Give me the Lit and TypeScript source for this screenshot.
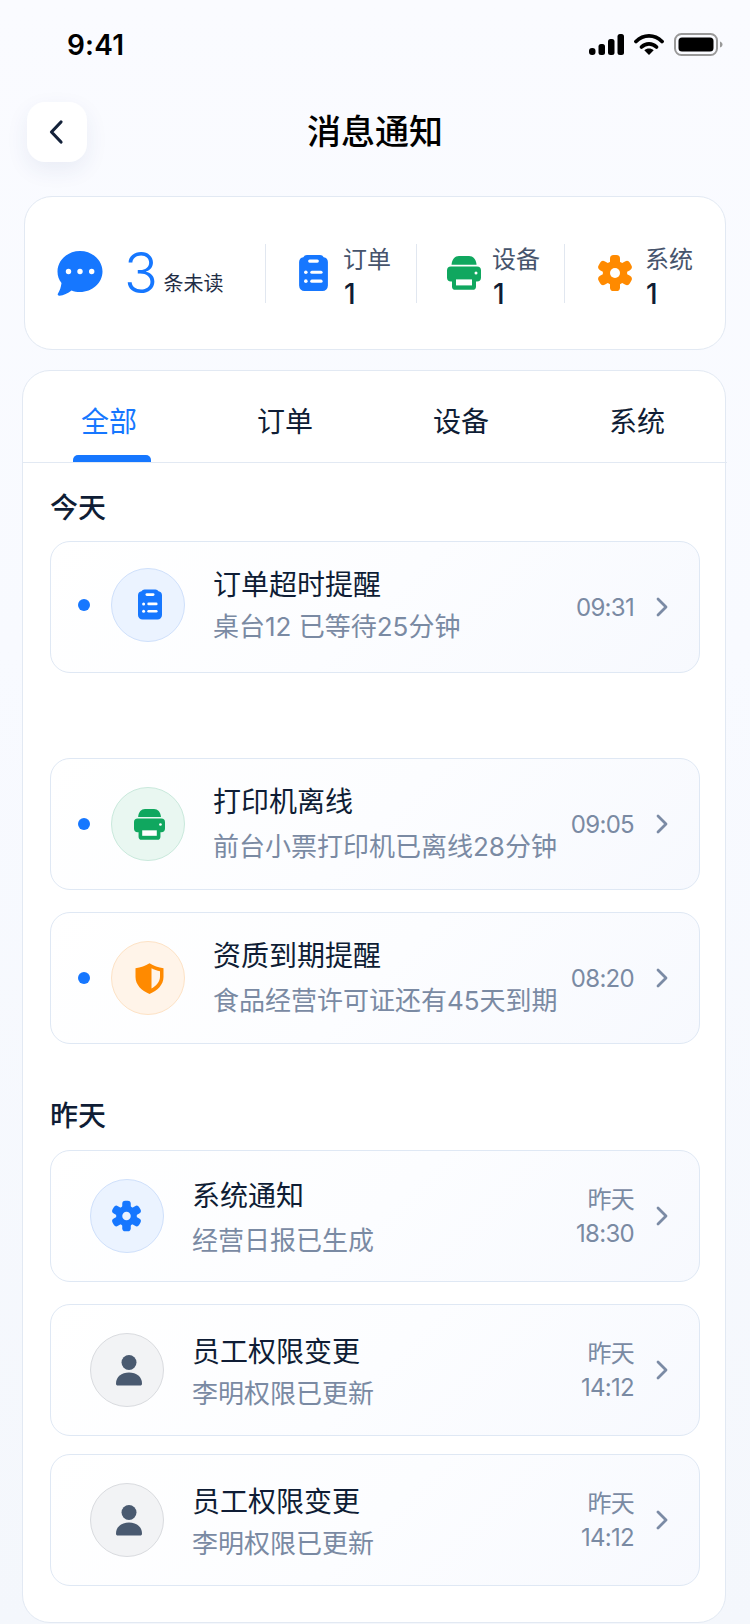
import { LitElement, html, css, svg } from "lit";
import { customElement } from "lit/decorators.js";

const clipboard = (cls: string) => html`<svg class=${cls} viewBox="0 0 24 30" aria-hidden="true">
  <path fill="#1677ff" d="M6.500 0h11a3.500 3.500 0 0 1 3 1.800A4.200 4.200 0 0 1 24 5.800V25.500a4.500 4.500 0 0 1-4.500 4.500h-15A4.500 4.500 0 0 1 0 25.500V5.800a4.200 4.200 0 0 1 3.500-4A3.500 3.500 0 0 1 6.500 0Z"/>
  <g fill="#fff"><rect x="7.500" y="3.800" width="9" height="2.600" rx="1.300"/><circle cx="5.600" cy="14.400" r="1.500"/><rect x="9.300" y="13.100" width="10.300" height="2.600" rx="1.300"/><circle cx="5.600" cy="21.800" r="1.500"/><rect x="9.300" y="20.500" width="10.300" height="2.600" rx="1.300"/></g>
</svg>`;

const printer = (cls: string) => html`<svg class=${cls} viewBox="0 0 34 34" aria-hidden="true">
  <path fill="#10a75f" d="M4.5 8.8 C5 3 8 0 12 0h10c4 0 7 3 7.6 8.8Z"/>
  <path fill="#10a75f" d="M4 10.4h26a4 4 0 0 1 4 4v7a4 4 0 0 1-4 4h-1v5a3.4 3.4 0 0 1-3.4 3.4H8.4A3.4 3.4 0 0 1 5 30.4v-5H4a4 4 0 0 1-4-4v-7a4 4 0 0 1 4-4Z"/>
  <rect fill="#fff" x="9" y="23.4" width="16" height="6"/><circle fill="#fff" cx="29" cy="17" r="1.5"/>
</svg>`;

const gear = (cls: string, color: string, hole: string) => html`<svg class=${cls} viewBox="0 0 34 36" aria-hidden="true">
  <g fill=${color}>
    <circle cx="17" cy="18" r="12.2"/>
    ${[0, 60, 120, 180, 240, 300].map(
      (a) => svg`<rect x="12" y="0" width="10" height="12" rx="3.6" transform="rotate(${a} 17 18)"/>`
    )}
  </g>
  <circle cx="17" cy="18" r="5" fill=${hole}/>
</svg>`;

const shield = html`<svg class="ic-shield shifted" viewBox="0 0 29 31" aria-hidden="true">
  <path fill="#ff8a00" fill-rule="evenodd" d="M14.5.3c4 2.6 9 4.4 14 5v8.7c0 7.6-6 13.8-14 16.9C6.500 27.800.5 21.600.5 14V5.300c5-.6 10-2.400 14-5ZM16.500 5.200V25.600c4.700-2.800 8.500-6.800 8.500-11.800V8.300c-3-.6-5.900-1.700-8.500-3.100Z"/>
</svg>`;

const person = html`<svg class="ic-person shifted" viewBox="0 0 26 31" aria-hidden="true">
  <circle cx="13" cy="7.500" r="7.500" fill="#4a5a70"/>
  <path fill="#4a5a70" d="M0 28.500C0 21.800 5.500 17.500 13 17.500s13 4.300 13 11c0 1.500-.6 2-2 2H2c-1.400 0-2-.5-2-2Z"/>
</svg>`;

const chevron = html`<svg class="chev" viewBox="0 0 12 20" aria-hidden="true">
  <path d="M2 2l8 8-8 8" fill="none" stroke="#7b8ba5" stroke-width="2.800" stroke-linecap="round" stroke-linejoin="round"/>
</svg>`;

interface Msg {
  title: string;
  sub: string;
  time: string[];
  kind: string;
  icon: unknown;
  dot: boolean;
  gap: string;
  extra?: string;
}

const today: Msg[] = [
  { title: "订单超时提醒", sub: "桌台12 已等待25分钟", time: ["09:31"], kind: "blue", icon: clipboard("ic-clip shifted"), dot: true, gap: "g42", extra: "raised" },
  { title: "打印机离线", sub: "前台小票打印机已离线28分钟", time: ["09:05"], kind: "green", icon: printer("ic-print shifted"), dot: true, gap: "g44" },
  { title: "资质到期提醒", sub: "食品经营许可证还有45天到期", time: ["08:20"], kind: "orange", icon: shield, dot: true, gap: "g44" },
];
const yesterday: Msg[] = [
  { title: "系统通知", sub: "经营日报已生成", time: ["昨天", "18:30"], kind: "blue", icon: gear("ic-gear", "#1677ff", "#ebf3ff"), dot: false, gap: "g45" },
  { title: "员工权限变更", sub: "李明权限已更新", time: ["昨天", "14:12"], kind: "gray", icon: person, dot: false, gap: "g41" },
  { title: "员工权限变更", sub: "李明权限已更新", time: ["昨天", "14:12"], kind: "gray", icon: person, dot: false, gap: "g41" },
];

@customElement("app-root")
export class AppRoot extends LitElement {
  static styles = css`
    :host {
      display: block;
      width: 750px;
      height: 1624px;
      overflow: hidden;
      background: linear-gradient(180deg, #fafbff 0%, #f8faff 40%, #f4f7fc 100%);
      font-family: Inter, "Noto Sans CJK SC", sans-serif;
      color: #0f1d35;
    }
    .status {
      height: 90px;
      display: flex;
      align-items: center;
      justify-content: space-between;
      padding: 0 27px 0 67px;
      box-sizing: border-box;
    }
    .clock { font-size: 28px; font-weight: 600; color: #000; letter-spacing: 0.2px; }
    .sys { display: flex; align-items: center; gap: 10px; margin-bottom: 2px; }
    .sys svg { display: block; }
    .header {
      margin-top: 12px;
      height: 60px;
      position: relative;
      display: flex;
      align-items: center;
      justify-content: center;
    }
    .back {
      position: absolute;
      left: 27px;
      top: 0;
      width: 60px;
      height: 60px;
      border-radius: 18px;
      background: #fff;
      box-shadow: 0 8px 22px rgba(40, 70, 130, 0.08);
      display: flex;
      align-items: center;
      justify-content: center;
    }
    .back svg { width: 16px; height: 26px; margin-right: 2px; }
    .title { font-size: 34px; font-weight: 500; color: #000; line-height: 60px; }

    .summary {
      margin: 34px 0 0 24px;
      width: 702px;
      height: 154px;
      box-sizing: border-box;
      background: #fff;
      border: 1px solid #e2e9f3;
      border-radius: 28px;
      display: flex;
      align-items: center;
    }
    .cell { height: 59px; display: flex; align-items: center; box-sizing: border-box; }
    .cell + .cell { border-left: 1px solid #e1e7f0; }
    .c0 { width: 240px; padding-left: 32px; }
    .c1 { width: 151px; padding-left: 33px; }
    .c2 { width: 148px; padding-left: 30px; }
    .c3 { width: 160px; padding-left: 33px; }
    .ic-chat { width: 46px; height: 45px; display: block; }
    .count { font-size: 56px; font-weight: 300; color: #1677ff; line-height: 59px; margin-left: 21px; width: 39.500px; }
    .unread { font-size: 20px; color: #1f2d45; align-self: flex-end; line-height: 24px; margin-bottom: 7px; }
    .stat-text { margin-left: 15px; margin-top: 7px; }
    .c2 .stat-text { margin-left: 11px; }
    .c3 .stat-text { margin-left: 13px; }
    .stat-label { font-size: 24px; line-height: 34px; color: #46546c; }
    .stat-num { font-size: 28px; font-weight: 500; line-height: 34px; color: #0f1d35; padding-left: 1px; }
    .s-clip { width: 29px; height: 36px; display: block; }
    .s-print { width: 34px; height: 34px; display: block; }
    .s-gear { width: 34px; height: 36px; display: block; }

    .panel {
      margin: 20px 0 0 22px;
      width: 704px;
      height: 1253px;
      box-sizing: border-box;
      background: #fff;
      border: 1px solid #e2e9f3;
      border-radius: 28px;
    }
    .tabs {
      height: 92px;
      display: grid;
      grid-template-columns: 174px 176px 176px 176px;
      grid-template-rows: 91px;
      border-bottom: 1px solid #e2e9f3;
      box-sizing: border-box;
      margin-right: -2px;
    }
    .tab {
      position: relative;
      font-size: 28px;
      line-height: 102px;
      text-align: center;
      color: #0f1d35;
    }
    .tab.on { color: #1677ff; padding-right: 2px; }
    .tab.on::after {
      content: "";
      position: absolute;
      left: 50px;
      bottom: 0;
      width: 78px;
      height: 7px;
      background: #1677ff;
      border-radius: 5px 5px 0 0;
    }
    .section { font-size: 28px; font-weight: 500; line-height: 40px; padding-left: 27px; }
    .s1 { margin-top: 25px; }
    .s2 { margin-top: 52px; }
    .list { margin: 0 0 0 27px; width: 650px; }
    .l1 { margin-top: 13px; }
    .l2 { margin-top: 14px; }
    .item {
      height: 132px;
      box-sizing: border-box;
      border: 1px solid #dfe8f4;
      border-radius: 20px;
      background: linear-gradient(135deg, #ffffff 0%, #fcfdff 50%, #f7f9fe 100%);
      display: flex;
      align-items: center;
      padding-right: 31px;
      padding-left: 39px;
    }
    .item.dotted { padding-left: 27px; }
    .raised .dot, .raised .circle { margin-bottom: 5px; }
    .raised .body { margin-bottom: 3px; }
    .dot { width: 12px; height: 12px; border-radius: 50%; background: #1677ff; margin-right: 21px; flex: none; }
    .circle {
      width: 74px;
      height: 74px;
      box-sizing: border-box;
      border-radius: 50%;
      border: 1px solid;
      display: flex;
      align-items: center;
      justify-content: center;
      flex: none;
      margin-right: 28px;
    }
    .blue { background: #ebf3ff; border-color: #cfe0fb; }
    .green { background: #e9f7f1; border-color: #c9e9dc; }
    .orange { background: #fff4e9; border-color: #fde2c5; }
    .gray { background: #f2f3f5; border-color: #d9dbdf; }
    .shifted { margin-left: 3px; }
    .ic-clip { width: 24px; height: 31px; display: block; }
    .ic-print { width: 31px; height: 31px; display: block; }
    .ic-shield { width: 29px; height: 31px; display: block; }
    .ic-person { width: 26px; height: 31px; display: block; }
    .ic-gear { width: 29px; height: 32px; display: block; margin-right: 1px; }
    .body { flex: 1; min-width: 0; }
    .m-title { font-size: 28px; line-height: 28px; color: #0f1d35; white-space: nowrap; }
    .m-sub { font-size: 26px; line-height: 26px; color: #7a8aa3; white-space: nowrap; }
    .g41 .body { margin-top: 4px; }
    .g41 .m-sub { margin-top: 15px; }
    .g42 .m-sub { margin-top: 15px; }
    .g44 .m-sub { margin-top: 18px; }
    .g45 .body { margin-top: 3px; }
    .g45 .m-sub { margin-top: 18px; }
    .when { text-align: right; font-size: 24px; line-height: 34px; letter-spacing: -0.7px; color: #7a8aa3; flex: none; margin-top: 2px; }
    .chev { width: 12px; height: 20px; margin-left: 22px; flex: none; display: block; }
    .gap-lg { margin-top: 85px; }
    .gap-md { margin-top: 22px; }
    .gap-sm { margin-top: 18px; }
  `;

  private row(m: Msg, gapClass: string) {
    return html`<div class="item ${m.gap} ${m.dot ? "dotted" : ""} ${m.extra ?? ""} ${gapClass}">
      ${m.dot ? html`<span class="dot"></span>` : null}
      <div class="circle ${m.kind}">${m.icon}</div>
      <div class="body">
        <div class="m-title">${m.title}</div>
        <div class="m-sub">${m.sub}</div>
      </div>
      <div class="when">${m.time.map((t) => html`<div>${t}</div>`)}</div>
      ${chevron}
    </div>`;
  }

  render() {
    return html`
      <div class="status">
        <span class="clock">9:41</span>
        <div class="sys">
          <svg width="35" height="21" viewBox="0 0 35 21" aria-hidden="true">
            <rect x="0" y="14" width="6.500" height="7" rx="3" fill="#000"/>
            <rect x="9.500" y="10" width="6.500" height="11" rx="2.500" fill="#000"/>
            <rect x="19" y="5" width="6.500" height="16" rx="2.500" fill="#000"/>
            <rect x="28.500" y="0" width="6.500" height="21" rx="2.500" fill="#000"/>
          </svg>
          <svg width="30" height="22" viewBox="0 0 30 22" aria-hidden="true">
            <path d="M2 8.500C9.500 1 20.500 1 28 8.500" fill="none" stroke="#000" stroke-width="3.800" stroke-linecap="round"/>
            <path d="M7.500 14C11.800 9.800 18.200 9.800 22.500 14" fill="none" stroke="#000" stroke-width="3.800" stroke-linecap="round"/>
            <path d="M10.300 17.300C12.800 15 17.200 15 19.700 17.300L15 22Z" fill="#000"/>
          </svg>
          <svg width="49" height="23" viewBox="0 0 49 23" aria-hidden="true">
            <rect x="1" y="1" width="42" height="21" rx="6.500" fill="none" stroke="#999" stroke-width="2"/>
            <rect x="4.500" y="4.500" width="35" height="14" rx="3.500" fill="#000"/>
            <path d="M46 8.500c1.500.5 2.500 1.500 2.500 3s-1 2.500-2.500 3Z" fill="#999"/>
          </svg>
        </div>
      </div>

      <div class="header">
        <div class="back">
          <svg viewBox="0 0 16 26" aria-hidden="true">
            <path d="M13 3 3.500 13 13 23" fill="none" stroke="#14223a" stroke-width="3.200" stroke-linecap="round" stroke-linejoin="round"/>
          </svg>
        </div>
        <div class="title">消息通知</div>
      </div>

      <div class="summary">
        <div class="cell c0">
          <svg class="ic-chat" viewBox="0 0 46 45" aria-hidden="true">
            <path fill="#1677ff" d="M23 0c12.400 0 22.500 9.200 22.500 20.500S35.400 41 23 41c-3 0-5.900-.5-8.500-1.500-3.500 2.700-8 4.800-12 5.300-1.500.2-2.300-1.300-1.500-2.400 1.700-2.400 3-6.200 3.500-10.400C1.900 28.800.5 24.800.5 20.500.5 9.200 10.600 0 23 0Z"/>
            <g fill="#fff"><circle cx="11.500" cy="20.500" r="2.700"/><circle cx="23" cy="20.500" r="2.700"/><circle cx="34.700" cy="20.500" r="2.700"/></g>
          </svg>
          <span class="count">3</span>
          <span class="unread">条未读</span>
        </div>
        <div class="cell c1">
          ${clipboard("s-clip")}
          <div class="stat-text"><div class="stat-label">订单</div><div class="stat-num">1</div></div>
        </div>
        <div class="cell c2">
          ${printer("s-print")}
          <div class="stat-text"><div class="stat-label">设备</div><div class="stat-num">1</div></div>
        </div>
        <div class="cell c3">
          ${gear("s-gear", "#ff8a00", "#fff")}
          <div class="stat-text"><div class="stat-label">系统</div><div class="stat-num">1</div></div>
        </div>
      </div>

      <div class="panel">
        <div class="tabs">
          <div class="tab on">全部</div>
          <div class="tab">订单</div>
          <div class="tab">设备</div>
          <div class="tab">系统</div>
        </div>
        <div class="section s1">今天</div>
        <div class="list l1">
          ${this.row(today[0], "")}
          ${this.row(today[1], "gap-lg")}
          ${this.row(today[2], "gap-md")}
        </div>
        <div class="section s2">昨天</div>
        <div class="list l2">
          ${this.row(yesterday[0], "")}
          ${this.row(yesterday[1], "gap-md")}
          ${this.row(yesterday[2], "gap-sm")}
        </div>
      </div>
    `;
  }
}
